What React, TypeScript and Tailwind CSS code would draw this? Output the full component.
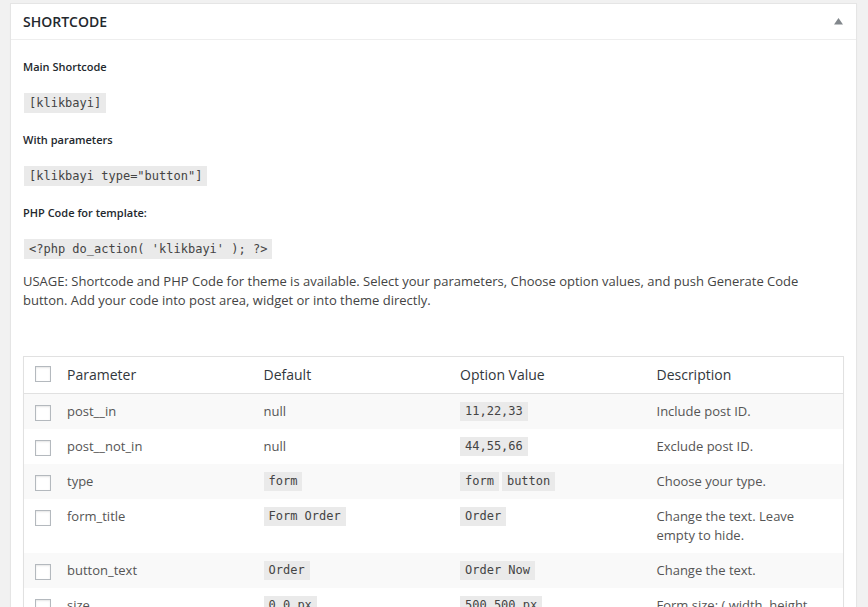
import React from "react";

const Code = ({ children, className = "" }: { children: React.ReactNode; className?: string }) => (
  <code
    className={
      "inline-block bg-[#eaeaea] px-[5px] text-[12px] text-[#444] " + className
    }
    style={{ fontFamily: '"DejaVu Sans Mono", "Liberation Mono", monospace' }}
  >
    {children}
  </code>
);

const Check = () => (
  <span className="block h-[16px] w-[16px] border border-[#b4b9be] bg-white shadow-[inset_0_1px_2px_rgba(0,0,0,0.1)]" />
);

type Row = { name: string; def: React.ReactNode; opt: React.ReactNode; desc: React.ReactNode };

const rows: Row[] = [
  { name: "post__in", def: "null", opt: <Code className="leading-[19px]">11,22,33</Code>, desc: "Include post ID." },
  { name: "post__not_in", def: "null", opt: <Code className="leading-[19px]">44,55,66</Code>, desc: "Exclude post ID." },
  {
    name: "type",
    def: <Code className="leading-[19px]">form</Code>,
    opt: (
      <span className="flex gap-[3px]">
        <Code className="leading-[19px]">form</Code>
        <Code className="leading-[19px]">button</Code>
      </span>
    ),
    desc: "Choose your type.",
  },
  {
    name: "form_title",
    def: <Code className="leading-[19px]">Form Order</Code>,
    opt: <Code className="leading-[19px]">Order</Code>,
    desc: "Change the text. Leave empty to hide.",
  },
  {
    name: "button_text",
    def: <Code className="leading-[19px]">Order</Code>,
    opt: <Code className="leading-[19px]">Order Now</Code>,
    desc: "Change the text.",
  },
  {
    name: "size",
    def: <Code className="leading-[19px]">0,0 px</Code>,
    opt: <Code className="leading-[19px]">500,500 px</Code>,
    desc: (
      <>
        Form size: ( width, height
        <br />
        ). Leave 0 for auto.
      </>
    ),
  },
  {
    name: "color",
    def: <Code className="leading-[19px]">#ffffff</Code>,
    opt: <Code className="leading-[19px]">#000000</Code>,
    desc: "Change the color.",
  },
];

export default function App() {
  return (
    <div
      className="h-[607px] overflow-hidden bg-[#f1f1f1] pl-[10px] pt-[3px]"
      style={{ fontFamily: '"Open Sans", "Noto Sans", sans-serif' }}
    >
      <div className="w-[847px] border border-[#e5e5e5] bg-white shadow-[0_1px_1px_rgba(0,0,0,0.04)]">
        <div className="flex items-center justify-between border-b border-[#eeeeee] px-[12px] py-[8px]">
          <h2 className="text-[14px] font-semibold leading-[19px] text-[#23282d]">SHORTCODE</h2>
          <svg width="9" height="7" viewBox="0 0 9 7" className="mr-[1px]">
            <polygon points="4.5,0 9,6.5 0,6.5" fill="#82878c" />
          </svg>
        </div>
        <div className="px-[12px] pb-[40px] text-[#444]">
          <p className="mt-[18px] text-[11px] font-semibold leading-[18px] text-[#23282d]">Main Shortcode</p>
          <div className="mt-[17px] flex">
            <Code className="ml-[1px] leading-[20px]">[klikbayi]</Code>
          </div>
          <p className="mt-[18px] text-[11px] font-semibold leading-[18px] text-[#23282d]">With parameters</p>
          <div className="mt-[17px] flex">
            <Code className="ml-[1px] leading-[20px]">[klikbayi type="button"]</Code>
          </div>
          <p className="mt-[18px] text-[11px] font-semibold leading-[18px] text-[#23282d]">PHP Code for template:</p>
          <div className="mt-[17px] flex">
            <Code className="ml-[1px] leading-[20px]">{"<?php do_action( 'klikbayi' ); ?>"}</Code>
          </div>
          <p className="mt-[13px] text-[13px] leading-[18.5px] text-[#444]">
            USAGE: Shortcode and PHP Code for theme is available. Select your parameters, Choose option values, and push
            Generate Code button. Add your code into post area, widget or into theme directly.
          </p>

          <div className="mt-[47px] border border-[#e1e1e1] shadow-[0_1px_1px_rgba(0,0,0,0.04)]">
            <div className="grid grid-cols-[33px_1fr_1fr_1fr_1fr] border-b border-[#e1e1e1] text-[14px] leading-[19.6px] text-[#32373c]">
              <div className="pl-[11px] pt-[9px]">
                <Check />
              </div>
              <div className="px-[10px] py-[8px]">Parameter</div>
              <div className="px-[10px] py-[8px]">Default</div>
              <div className="px-[10px] py-[8px]">Option Value</div>
              <div className="px-[10px] py-[8px]">Description</div>
            </div>
            {rows.map((r, i) => (
              <div
                key={r.name}
                className={
                  "grid grid-cols-[33px_1fr_1fr_1fr_1fr] text-[13px] leading-[19px] text-[#555] " +
                  (i % 2 === 0 ? "bg-[#f9f9f9]" : "bg-white")
                }
              >
                <div className="pl-[11px] pt-[11px]">
                  <Check />
                </div>
                <div className="px-[10px] py-[8px]">{r.name}</div>
                <div className="flex items-start px-[10px] py-[8px]">{r.def}</div>
                <div className="flex items-start px-[10px] py-[8px]">{r.opt}</div>
                <div className="px-[10px] py-[8px]">{r.desc}</div>
              </div>
            ))}
          </div>
        </div>
      </div>
    </div>
  );
}
